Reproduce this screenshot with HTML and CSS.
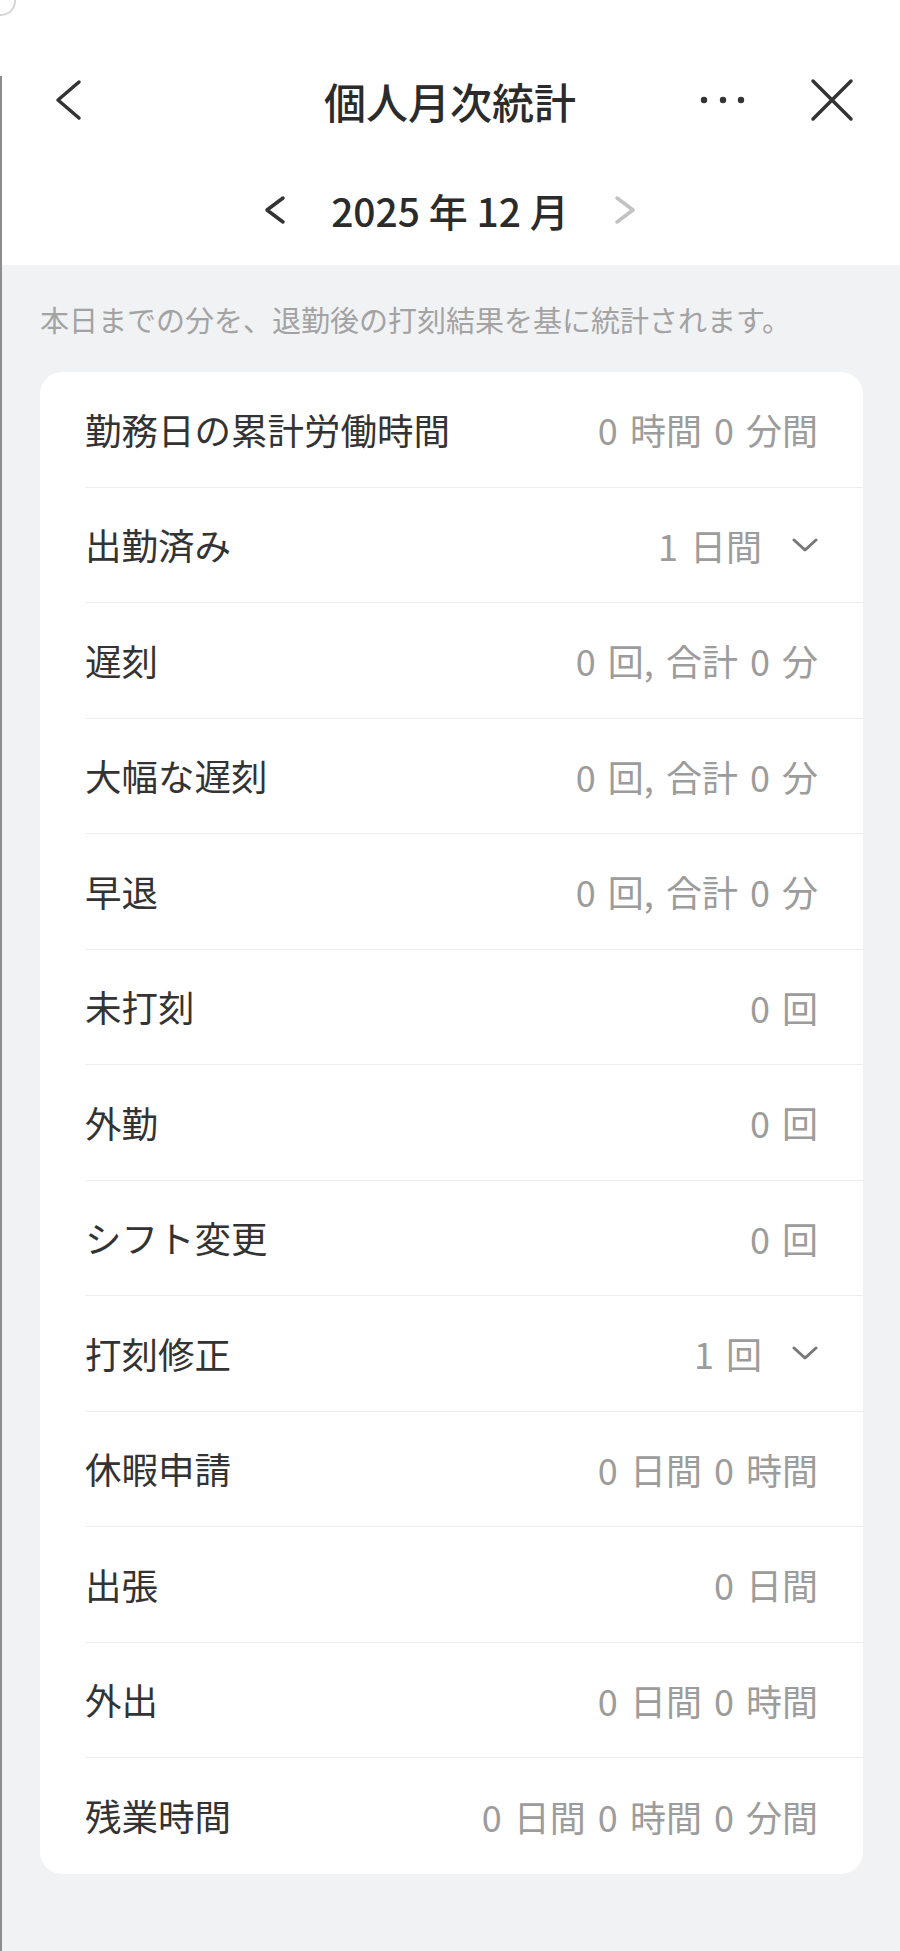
FILE: index.html
```html
<!DOCTYPE html>
<html lang="ja">
<head>
    <meta charset="UTF-8">
    <meta name="viewport" content="width=device-width, initial-scale=1.0">
    <title>個人月次統計</title>
    <link rel="stylesheet" href="styles.css">
</head>
<body>
    <div class="page">
        <div class="header">
            <div class="topbar">
                <div class="topbar-left">
                    <svg class="icon-back" width="30" height="44" viewBox="0 0 30 44"><path d="M25 4 L4 22 L25 40" /></svg>
                </div>
                <div class="title">個人月次統計</div>
                <div class="topbar-right">
                    <svg class="icon-more" width="50" height="10" viewBox="0 0 50 10"><circle cx="6" cy="5" r="3.2"/><circle cx="25" cy="5" r="3.2"/><circle cx="43" cy="5" r="3.2"/></svg>
                    <svg class="icon-close" width="44" height="44" viewBox="0 0 44 44"><path d="M3 3 L41 41 M41 3 L3 41" /></svg>
                </div>
            </div>
            <div class="month-nav">
                <svg class="month-arrow" width="24" height="30" viewBox="0 0 24 30"><path d="M20 3 L4 15 L20 27" /></svg>
                <div class="month-text">2025 年 12 月</div>
                <svg class="month-arrow disabled" width="24" height="30" viewBox="0 0 24 30"><path d="M4 3 L20 15 L4 27" /></svg>
            </div>
        </div>

        <div class="content">
            <p class="note">本日までの分を、退勤後の打刻結果を基に統計されます。</p>

            <div class="card">
                <div class="row"><span class="label">勤務日の累計労働時間</span><span class="value">0 時間 0 分間</span></div>
                <div class="row"><span class="label">出勤済み</span><span class="value">1 日間<svg class="icon-down" width="26" height="14" viewBox="0 0 26 14"><path d="M2 2 L13 12 L24 2" /></svg></span></div>
                <div class="row"><span class="label">遅刻</span><span class="value">0 回, 合計 0 分</span></div>
                <div class="row"><span class="label">大幅な遅刻</span><span class="value">0 回, 合計 0 分</span></div>
                <div class="row"><span class="label">早退</span><span class="value">0 回, 合計 0 分</span></div>
                <div class="row"><span class="label">未打刻</span><span class="value">0 回</span></div>
                <div class="row"><span class="label">外勤</span><span class="value">0 回</span></div>
                <div class="row"><span class="label">シフト変更</span><span class="value">0 回</span></div>
                <div class="row"><span class="label">打刻修正</span><span class="value">1 回<svg class="icon-down" width="26" height="14" viewBox="0 0 26 14"><path d="M2 2 L13 12 L24 2" /></svg></span></div>
                <div class="row"><span class="label">休暇申請</span><span class="value">0 日間 0 時間</span></div>
                <div class="row"><span class="label">出張</span><span class="value">0 日間</span></div>
                <div class="row"><span class="label">外出</span><span class="value">0 日間 0 時間</span></div>
                <div class="row"><span class="label">残業時間</span><span class="value">0 日間 0 時間 0 分間</span></div>
            </div>
        </div>
    </div>
</body>
</html>
```

FILE: styles.css
```css
body {
    margin: 0;
    background-color: #f1f2f4;
    font-family: "Noto Sans CJK JP", "Noto Sans", sans-serif;
    color: #333;
}
.page {
    position: relative;
    min-height: 100vh;
}
/* window edge on the left */
.page::before {
    content: "";
    position: absolute;
    left: 0;
    top: 76px;
    bottom: 0;
    width: 2px;
    background-color: #8d8d8d;
}
/* corner of the window behind, top left */
.page::after {
    content: "";
    position: absolute;
    left: -14px;
    top: -14px;
    width: 26px;
    height: 26px;
    border-radius: 50%;
    border: 2px solid #d6d6d6;
}
.header {
    background-color: #fff;
    padding-top: 40px;
    padding-bottom: 15px;
}
.topbar {
    height: 120px;
    display: grid;
    grid-template-columns: 1fr auto 1fr;
    align-items: center;
}
.topbar-left {
    padding-left: 54px;
    display: flex;
    align-items: center;
}
.topbar-right {
    padding-right: 46px;
    display: flex;
    justify-content: flex-end;
    align-items: center;
    gap: 62px;
}
.icon-back path,
.icon-close path {
    fill: none;
    stroke: #333;
    stroke-width: 3.5;
    stroke-linecap: round;
    stroke-linejoin: round;
}
.icon-more circle {
    fill: #333;
}
.title {
    font-size: 42px;
    font-weight: 500;
    color: #2b2b2b;
}
.month-nav {
    margin-top: 10px;
    height: 80px;
    display: flex;
    justify-content: center;
    align-items: center;
    gap: 44px;
}
.month-text {
    font-size: 39px;
    font-weight: 500;
    color: #2b2b2b;
}
.month-arrow path {
    fill: none;
    stroke: #333;
    stroke-width: 3.5;
    stroke-linecap: round;
    stroke-linejoin: round;
}
.month-arrow.disabled path {
    stroke: #c2c2c2;
}
.content {
    padding: 34px 37px 76px 40px;
}
.note {
    margin: 0 0 33px;
    font-size: 29px;
    line-height: 40px;
    color: #a3a3a3;
    white-space: nowrap;
}
.card {
    background-color: #fff;
    border-radius: 22px;
}
.row {
    box-sizing: border-box;
    height: 115.5px;
    margin-left: 45px;
    padding-right: 45px;
    display: flex;
    justify-content: space-between;
    align-items: center;
    border-bottom: 1px solid #ededed;
}
.row:last-child {
    border-bottom: none;
}
.label {
    font-size: 36.5px;
    color: #333;
}
.value {
    font-size: 36px;
    word-spacing: 4px;
    color: #9c9c9c;
    display: flex;
    align-items: center;
    white-space: pre;
}
.icon-down {
    margin-left: 30px;
}
.icon-down path {
    fill: none;
    stroke: #777;
    stroke-width: 3;
    stroke-linecap: round;
    stroke-linejoin: round;
}
```
